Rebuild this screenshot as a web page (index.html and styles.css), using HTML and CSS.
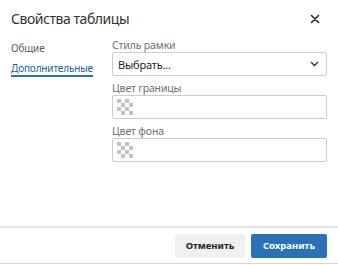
FILE: index.html
```html
<!DOCTYPE html>
<html lang="ru">
<head>
<meta charset="utf-8">
<link rel="stylesheet" href="styles.css">
</head>
<body>
<div class="dialog">
  <div class="header">
    <h1 class="title">Свойства таблицы</h1>
    <button class="close" aria-label="Закрыть">
      <svg width="10" height="10" viewBox="0 0 10 10"><path d="M1.5 1.5L8.5 8.5M8.5 1.5L1.5 8.5" stroke="#2b2b2b" stroke-width="1.6" stroke-linecap="round"/></svg>
    </button>
  </div>
  <div class="body">
    <nav class="nav">
      <a class="nav-item">Общие</a>
      <a class="nav-item active">Дополнительные</a>
    </nav>
    <div class="form">
      <div class="field">
        <label class="label">Стиль рамки</label>
        <div class="select">
          <span>Выбрать...</span>
          <svg width="9" height="6" viewBox="0 0 9 6"><path d="M1 1L4.5 4.5L8 1" fill="none" stroke="#333" stroke-width="1.4"/></svg>
        </div>
      </div>
      <div class="field">
        <label class="label">Цвет границы</label>
        <div class="color-input">
          <svg class="swatch" width="16" height="16" viewBox="0 0 4 4"><path d="M0 0h1v1H0zM2 0h1v1H2zM1 1h1v1H1zM3 1h1v1H3zM0 2h1v1H0zM2 2h1v1H2zM1 3h1v1H1zM3 3h1v1H3z" fill="#c2c2c2"/></svg>
        </div>
      </div>
      <div class="field">
        <label class="label">Цвет фона</label>
        <div class="color-input">
          <svg class="swatch" width="16" height="16" viewBox="0 0 4 4"><path d="M0 0h1v1H0zM2 0h1v1H2zM1 1h1v1H1zM3 1h1v1H3zM0 2h1v1H0zM2 2h1v1H2zM1 3h1v1H1zM3 3h1v1H3z" fill="#c2c2c2"/></svg>
        </div>
      </div>
    </div>
  </div>
  <div class="footer">
    <button class="btn btn-cancel">Отменить</button>
    <button class="btn btn-save">Сохранить</button>
  </div>
</div>
</body>
</html>
```
FILE: styles.css
```css
* { box-sizing: border-box; }
html, body { margin: 0; padding: 0; background: #fff; }
body {
  font-family: "Noto Sans", "Open Sans", sans-serif;
  color: #222f3e;
  width: 338px;
  height: 265px;
  overflow: hidden;
}
.dialog {
  width: 338px;
  height: 264px;
  display: flex;
  flex-direction: column;
  border-bottom: 1px solid #d6d6d6;
}
.header {
  height: 37px;
  display: flex;
  align-items: center;
  justify-content: space-between;
  padding: 0 18px 0 11px;
}
.title {
  margin: 0;
  font-size: 14px;
  letter-spacing: -0.45px;
  font-weight: 400;
  color: #333;
  line-height: 20px;
}
.close {
  border: 0;
  background: none;
  padding: 0;
  width: 10px;
  height: 16px;
  display: flex;
  align-items: center;
  justify-content: center;
}
.body {
  flex: 1;
  display: flex;
  padding: 1px 11px 0 11px;
}
.nav {
  width: 101px;
  display: flex;
  flex-direction: column;
  gap: 6px;
  padding-top: 3px;
}
.nav-item {
  font-size: 10px;
  letter-spacing: -0.15px;
  color: #5b5b5b;
  line-height: 15px;
  align-self: flex-start;
}
.nav-item.active {
  color: #1e5fa3;
  border-bottom: 2px solid #2a72b5;
  line-height: 13px;
}
.form {
  flex: 1;
  display: flex;
  flex-direction: column;
  gap: 5px;
}
.field {
  display: flex;
  flex-direction: column;
}
.label {
  font-size: 10.5px;
  letter-spacing: -0.15px;
  color: #6f6f6f;
  line-height: 14px;
  height: 14px;
}
.select, .color-input {
  height: 24px;
  border: 1px solid #cccccc;
  border-radius: 2px;
  display: flex;
  align-items: center;
}
.select {
  justify-content: space-between;
  padding: 0 7px 0 5px;
  font-size: 11px;
  letter-spacing: -0.2px;
  color: #222;
}
.color-input { padding-left: 4px; }
.swatch {
  display: block;
  width: 16px;
  height: 16px;
}
.footer {
  height: 37px;
  border-top: 2px solid #e4e4e4;
  display: flex;
  justify-content: flex-end;
  align-items: center;
  gap: 6px;
  padding: 0 11px 0 0;
}
.btn {
  height: 24px;
  border-radius: 2px;
  border: 0;
  font-family: inherit;
  font-size: 9.5px;
  font-weight: 700;
  padding: 0;
}
.btn-cancel {
  width: 70px;
  background: #f0f0f0;
  color: #222;
}
.btn-save {
  width: 76px;
  background: #2a72b5;
  color: #fff;
}
```
